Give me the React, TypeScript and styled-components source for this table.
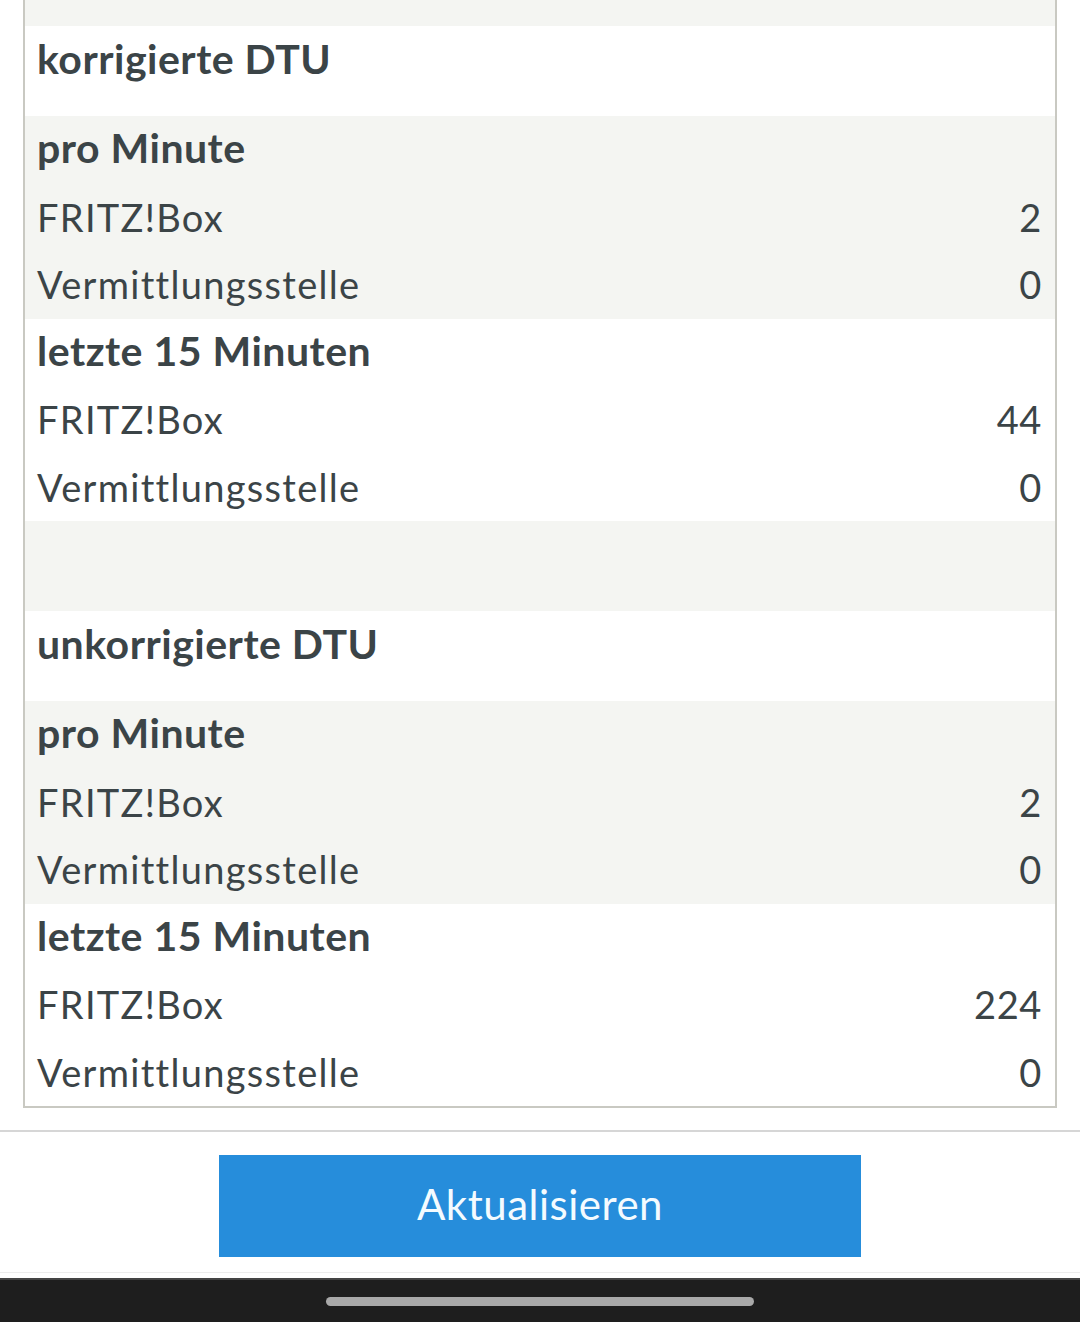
import React from "react";
import styled, { createGlobalStyle } from "styled-components";

const GlobalStyle = createGlobalStyle`
  html, body {
    margin: 0;
    padding: 0;
    background: #ffffff;
  }
  body {
    font-family: Lato, "Open Sans", sans-serif;
    color: #3b4447;
  }
`;

interface ValueRow {
  label: string;
  value: string;
}

interface Group {
  title: string;
  rows: ValueRow[];
}

interface Section {
  title: string;
  groups: Group[];
}

const sections: Section[] = [
  {
    title: "korrigierte DTU",
    groups: [
      {
        title: "pro Minute",
        rows: [
          { label: "FRITZ!Box", value: "2" },
          { label: "Vermittlungsstelle", value: "0" },
        ],
      },
      {
        title: "letzte 15 Minuten",
        rows: [
          { label: "FRITZ!Box", value: "44" },
          { label: "Vermittlungsstelle", value: "0" },
        ],
      },
    ],
  },
  {
    title: "unkorrigierte DTU",
    groups: [
      {
        title: "pro Minute",
        rows: [
          { label: "FRITZ!Box", value: "2" },
          { label: "Vermittlungsstelle", value: "0" },
        ],
      },
      {
        title: "letzte 15 Minuten",
        rows: [
          { label: "FRITZ!Box", value: "224" },
          { label: "Vermittlungsstelle", value: "0" },
        ],
      },
    ],
  },
];

const App: React.FC = () => {
  return (
    <>
      <GlobalStyle />
      <Page>
        <Content>
          <Table>
            {sections.map((section, si) => (
              <React.Fragment key={si}>
                <Spacer $first={si === 0} />
                <SectionTitle>{section.title}</SectionTitle>
                {section.groups.map((group, gi) => (
                  <GroupBlock key={gi} $striped={gi === 0}>
                    <GroupTitle>{group.title}</GroupTitle>
                    {group.rows.map((row, ri) => (
                      <Row key={ri}>
                        <span>{row.label}</span>
                        <Value>{row.value}</Value>
                      </Row>
                    ))}
                  </GroupBlock>
                ))}
              </React.Fragment>
            ))}
          </Table>
        </Content>
        <Footer>
          <RefreshButton>Aktualisieren</RefreshButton>
        </Footer>
        <NavBar>
          <Handle />
        </NavBar>
      </Page>
    </>
  );
};

export default App;

const Page = styled.div`
  width: 1080px;
  height: 1322px;
  display: flex;
  flex-direction: column;
  overflow: hidden;
`;

const Content = styled.div`
  padding: 0 23px;
  flex: 1;
`;

const Table = styled.div`
  border: 2px solid #c9c9c2;
  border-top: none;
  display: flex;
  flex-direction: column;
`;

const Spacer = styled.div<{ $first: boolean }>`
  height: ${({ $first }) => ($first ? 26 : 90)}px;
  background: #f4f5f2;
`;

const SectionTitle = styled.div`
  height: 90px;
  box-sizing: border-box;
  padding: 8px 12px 0;
  font-size: 41px;
  line-height: 1.2;
  font-weight: 700;
  letter-spacing: 0.5px;
  background: #ffffff;
`;

const GroupBlock = styled.div<{ $striped: boolean }>`
  background: ${({ $striped }) => ($striped ? "#f4f5f2" : "#ffffff")};
  display: flex;
  flex-direction: column;
`;

const GroupTitle = styled.div`
  height: 68px;
  box-sizing: border-box;
  padding: 7px 12px 0;
  font-size: 41px;
  line-height: 1.2;
  font-weight: 700;
  letter-spacing: 0.5px;
`;

const Row = styled.div`
  height: 67.25px;
  display: flex;
  align-items: center;
  justify-content: space-between;
  padding: 0 13px 0 12px;
  font-size: 38px;
  line-height: 1.2;
  font-weight: 400;
  letter-spacing: 1.3px;
`;

const Value = styled.span`
  text-align: right;
  letter-spacing: 0.6px;
`;

const Footer = styled.div`
  height: 143px;
  box-sizing: border-box;
  border-top: 2px solid #d6d6d6;
  border-bottom: 1px solid #ececec;
  display: flex;
  justify-content: center;
  align-items: flex-start;
  padding-top: 23px;
  flex-shrink: 0;
`;

const RefreshButton = styled.button`
  width: 642px;
  height: 102px;
  border: none;
  border-radius: 0;
  background: #268ddb;
  color: #f4fbff;
  font-family: Lato, "Open Sans", sans-serif;
  font-size: 42px;
  font-weight: 400;
  letter-spacing: 0.5px;
  padding: 0 0 4px;
  cursor: pointer;
`;

const NavBar = styled.div`
  height: 44px;
  box-sizing: border-box;
  background: #1e1e1e;
  border-top: 2px solid #444444;
  margin-top: 5px;
  display: flex;
  justify-content: center;
  align-items: center;
  flex-shrink: 0;
`;

const Handle = styled.div`
  width: 428px;
  height: 9px;
  border-radius: 5px;
  background: #a9a9a9;
`;
